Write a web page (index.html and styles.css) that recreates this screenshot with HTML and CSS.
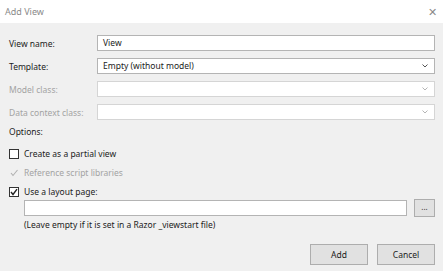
FILE: index.html
```html
<!DOCTYPE html>
<html lang="en">
<head>
    <meta charset="UTF-8">
    <title>Add View</title>
    <link rel="stylesheet" href="styles.css">
</head>
<body>
    <div class="dialog">
        <div class="titlebar">
            <span class="title">Add View</span>
            <span class="close">&#x2715;</span>
        </div>

        <div class="content">
            <div class="field">
                <label>View name:</label>
                <div class="box">View</div>
            </div>
            <div class="field">
                <label>Template:</label>
                <div class="box select">Empty (without model)
                    <svg class="arrow" width="6" height="4" viewBox="0 0 6 4"><path d="M0.5 0.5 L3 3 L5.5 0.5" fill="none" stroke="#555" stroke-width="1"/></svg>
                </div>
            </div>
            <div class="field disabled">
                <label>Model class:</label>
                <div class="box select">
                    <svg class="arrow" width="6" height="4" viewBox="0 0 6 4"><path d="M0.5 0.5 L3 3 L5.5 0.5" fill="none" stroke="#b5b5b5" stroke-width="1"/></svg>
                </div>
            </div>
            <div class="field disabled last">
                <label>Data context class:</label>
                <div class="box select">
                    <svg class="arrow" width="6" height="4" viewBox="0 0 6 4"><path d="M0.5 0.5 L3 3 L5.5 0.5" fill="none" stroke="#b5b5b5" stroke-width="1"/></svg>
                </div>
            </div>

            <div class="options">Options:</div>

            <div class="checks">
                <div class="check">
                    <span class="cb"></span>
                    <span>Create as a partial view</span>
                </div>
                <div class="check disabled">
                    <span class="cb flat">
                        <svg width="10" height="10" viewBox="0 0 10 10"><path d="M2 5 L4 7.5 L8.5 2" fill="none" stroke="#b0b0b0" stroke-width="1.1"/></svg>
                    </span>
                    <span>Reference script libraries</span>
                </div>
                <div class="check">
                    <span class="cb">
                        <svg width="8" height="8" viewBox="0 0 8 8"><path d="M1 4 L3 6.5 L7 1.2" fill="none" stroke="#222" stroke-width="1.4"/></svg>
                    </span>
                    <span>Use a layout page:</span>
                </div>
            </div>

            <div class="layout-row">
                <div class="box"></div>
                <div class="browse">...</div>
            </div>
            <div class="hint">(Leave empty if it is set in a Razor _viewstart file)</div>

            <div class="buttons">
                <div class="btn">Add</div>
                <div class="btn">Cancel</div>
            </div>
        </div>
    </div>
</body>
</html>
```

FILE: styles.css
```css
body {
    margin: 0;
    font-family: "Noto Sans", "Open Sans", sans-serif;
    font-size: 8.5px;
    color: #1b1b1b;
    background-color: #f0f0f0;
}

.dialog {
    width: 443px;
    height: 271px;
    overflow: hidden;
    background-color: #f0f0f0;
}

.titlebar {
    height: 23px;
    background: white;
    display: flex;
    align-items: center;
    justify-content: space-between;
    padding: 0 6px 0 5px;
}
.title {
    color: #8a8a8a;
    font-size: 9px;
}
.close {
    color: #8a8a8a;
    font-size: 11px;
}

.content {
    padding: 12px 8px 0 9px;
}

.field {
    display: grid;
    grid-template-columns: 88px 1fr;
    align-items: center;
    margin-bottom: 7px;
}
.field.last {
    margin-bottom: 0;
}
.field.disabled {
    color: #a3a3a3;
}

.box {
    height: 16px;
    box-sizing: border-box;
    background: white;
    border: 1px solid #b4b4b4;
    padding: 0 5px;
    line-height: 14px;
    position: relative;
}
.disabled .box {
    border-color: #d5d5d5;
}
.arrow {
    position: absolute;
    right: 6px;
    top: 5px;
}

.options {
    margin-top: 5px;
    height: 14px;
    line-height: 14px;
}

.checks {
    margin-top: 5px;
}
.check {
    display: flex;
    align-items: center;
    gap: 5px;
    height: 19px;
}
.check.disabled {
    color: #a3a3a3;
}
.cb {
    width: 10px;
    height: 10px;
    box-sizing: border-box;
    border: 1px solid #333;
    background: white;
    display: flex;
    align-items: center;
    justify-content: center;
}
.cb.flat {
    border: none;
    background: none;
}

.layout-row {
    display: flex;
    gap: 7px;
    align-items: center;
    margin-top: -2px;
    padding-left: 15px;
}
.layout-row .box {
    flex: 1;
}
.browse {
    width: 21px;
    height: 18px;
    box-sizing: border-box;
    background: #e1e1e1;
    border: 1px solid #adadad;
    text-align: center;
    line-height: 14px;
    font-size: 8px;
    color: #333;
}

.hint {
    padding-left: 15px;
    margin-top: 1px;
    height: 14px;
    line-height: 14px;
}

.buttons {
    display: flex;
    justify-content: flex-end;
    gap: 9px;
    margin-top: 12px;
}
.btn {
    width: 58px;
    height: 21px;
    box-sizing: border-box;
    background: #e1e1e1;
    border: 1px solid #adadad;
    text-align: center;
    line-height: 19px;
}
```
